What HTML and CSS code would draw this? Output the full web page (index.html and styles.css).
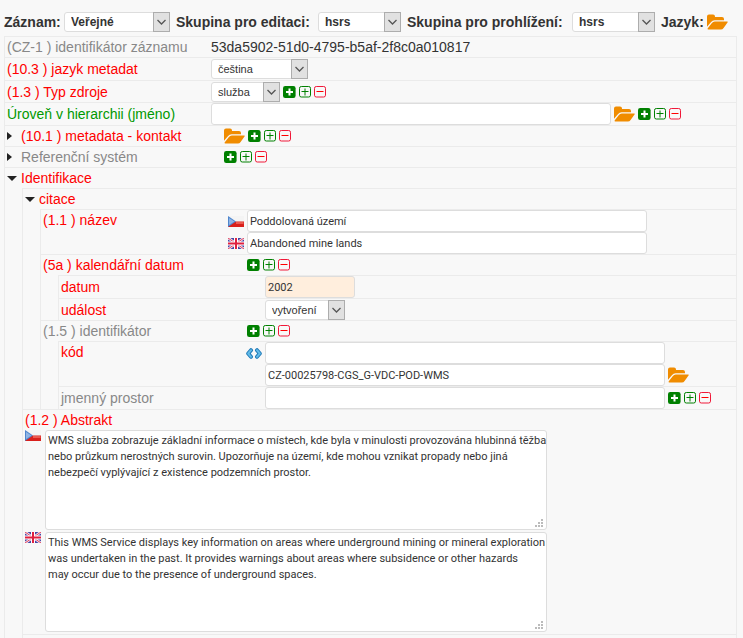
FILE: index.html
```
<!DOCTYPE html>
<html lang="cs">
<head>
<meta charset="utf-8">
<title>Metadata</title>
<link rel="stylesheet" href="styles.css">
</head>
<body>
<svg class="defs" aria-hidden="true">
  <symbol id="folder" viewBox="0 0 21 16">
    <path d="M0 12.8V2.4Q0 .4 2 .4H6Q8 .4 8 2.4V2.9H15Q17 2.9 17 4.9V6.2H7.6Q5.5 6.2 4.1 7.9z"/>
    <path d="M7.8 7.4H20Q21.4 7.4 20.5 8.6L16.6 13.9Q15.6 15.4 13.9 15.4H1.3Q0 15.4.8 14.2L4.9 8.9Q6 7.4 7.8 7.4z"/>
  </symbol>
  <symbol id="plus-full" viewBox="0 0 13 12">
    <rect width="12.6" height="12" rx="2.2" fill="#008000"/>
    <path d="M6.5 2.5v7M3 6h7" stroke="#fff" stroke-width="2"/>
  </symbol>
  <symbol id="plus-line" viewBox="0 0 12 12">
    <rect x=".5" y=".5" width="11" height="10.5" rx="1.8" fill="none" stroke="#008000"/>
    <path d="M6 2.5v7M2.5 5.5h7" stroke="#008000"/>
  </symbol>
  <symbol id="minus-line" viewBox="0 0 12 12">
    <rect x=".5" y=".5" width="11" height="10.5" rx="1.8" fill="none" stroke="#f01838"/>
    <path d="M2.5 5.5h7" stroke="#f00"/>
  </symbol>
  <symbol id="chevron" viewBox="0 0 17 20">
    <rect x=".5" y=".5" width="16" height="19" fill="#e1e1e1" stroke="#adadad"/>
    <path d="M4.5 8L8.5 12L12.5 8" fill="none" stroke="#555" stroke-width="1.3"/>
  </symbol>
  <symbol id="cz" viewBox="0 0 16 11">
    <rect width="16" height="11" fill="#f4f4f4"/>
    <path d="M0 5.5H16V11H0z" fill="#d9201c"/>
    <path d="M8 6H15.500V8H8z" fill="#ea5a50"/>
    <path d="M0 0L8 5.500L0 11z" fill="#4f86cd"/>
    <path d="M1 2L6.500 5.500L1 9z" fill="#8fb5e6"/>
  </symbol>
  <symbol id="gb" viewBox="0 0 16 11">
    <rect width="16" height="11" fill="#4545a5"/>
    <path d="M0 0L16 11M16 0L0 11" stroke="#f3e6f0" stroke-width="2.600"/>
    <path d="M0 0L16 11M16 0L0 11" stroke="#e2405c" stroke-width="1"/>
    <path d="M8 0V11M0 5.500H16" stroke="#fff" stroke-width="4"/>
    <path d="M8 0V11M0 5.500H16" stroke="#df2040" stroke-width="2"/>
  </symbol>
  <symbol id="swap" viewBox="0 0 16 11">
    <g fill="none" stroke-linejoin="round" stroke-linecap="round">
      <path d="M5 2.200L2.200 5.500L5 8.800M11 2.200L13.800 5.500L11 8.800" stroke="#1f7ab8" stroke-width="4"/>
      <path d="M5 2.200L2.200 5.500L5 8.800M11 2.200L13.800 5.500L11 8.800" stroke="#62bbe8" stroke-width="2"/>
    </g>
  </symbol>
</svg>

<header class="bar">
  <div class="field field-record">
    <label for="record">Záznam:</label>
    <span class="select select-l"><select id="record"><option>Veřejné</option></select><svg><use href="#chevron"/></svg></span>
  </div>
  <div class="field field-edit">
    <label for="edit">Skupina pro editaci:</label>
    <span class="select select-m"><select id="edit"><option>hsrs</option></select><svg><use href="#chevron"/></svg></span>
  </div>
  <div class="field field-view">
    <label for="view">Skupina pro prohlížení:</label>
    <span class="select select-m"><select id="view"><option>hsrs</option></select><svg><use href="#chevron"/></svg></span>
  </div>
  <div class="field">
    <span>Jazyk:</span>
    <button class="icon folder" aria-label="Jazyk"><svg><use href="#folder"/></svg></button>
  </div>
</header>

<main class="form">
  <div class="row">
    <span class="label optional">(CZ-1 ) identifikátor záznamu</span>
    <span>53da5902-51d0-4795-b5af-2f8c0a010817</span>
  </div>
  <div class="row row-input">
    <label class="label required" for="lang">(10.3 ) jazyk metadat</label>
    <span class="select select-n"><select id="lang"><option>čeština</option></select><svg><use href="#chevron"/></svg></span>
  </div>
  <div class="row row-select">
    <label class="label required" for="type">(1.3 ) Typ zdroje</label>
    <span class="select select-s"><select id="type"><option>služba</option></select><svg><use href="#chevron"/></svg></span>
    <button class="icon" aria-label="Přidat"><svg><use href="#plus-full"/></svg></button>
    <button class="icon icon-line" aria-label="Kopírovat"><svg><use href="#plus-line"/></svg></button>
    <button class="icon icon-line" aria-label="Odebrat"><svg><use href="#minus-line"/></svg></button>
  </div>
  <div class="row row-input">
    <label class="label conditional" for="level">Úroveň v hierarchii (jméno)</label>
    <input class="text" id="level" type="text">
    <button class="icon folder" aria-label="Vybrat"><svg><use href="#folder"/></svg></button>
    <button class="icon" aria-label="Přidat"><svg><use href="#plus-full"/></svg></button>
    <button class="icon icon-line" aria-label="Kopírovat"><svg><use href="#plus-line"/></svg></button>
    <button class="icon icon-line" aria-label="Odebrat"><svg><use href="#minus-line"/></svg></button>
  </div>
  <div class="row">
    <button class="twisty" aria-label="Rozbalit"></button>
    <span class="label required">(10.1 ) metadata - kontakt</span>
    <button class="icon folder" aria-label="Vybrat"><svg><use href="#folder"/></svg></button>
    <button class="icon" aria-label="Přidat"><svg><use href="#plus-full"/></svg></button>
    <button class="icon icon-line" aria-label="Kopírovat"><svg><use href="#plus-line"/></svg></button>
    <button class="icon icon-line" aria-label="Odebrat"><svg><use href="#minus-line"/></svg></button>
  </div>
  <div class="row">
    <button class="twisty" aria-label="Rozbalit"></button>
    <span class="label optional">Referenční systém</span>
    <button class="icon" aria-label="Přidat"><svg><use href="#plus-full"/></svg></button>
    <button class="icon icon-line" aria-label="Kopírovat"><svg><use href="#plus-line"/></svg></button>
    <button class="icon icon-line" aria-label="Odebrat"><svg><use href="#minus-line"/></svg></button>
  </div>
  <div class="row">
    <button class="twisty open" aria-label="Sbalit"></button>
    <span class="label required">Identifikace</span>
  </div>
  <section class="group">
    <div class="row">
      <button class="twisty open" aria-label="Sbalit"></button>
      <span class="label required">citace</span>
    </div>
    <section class="group">
      <div class="row row-multi">
        <span class="label label-short required">(1.1 ) název</span>
        <div class="values">
          <div class="line"><svg class="mark"><use href="#cz"/></svg><input class="text" type="text" aria-label="Název česky" value="Poddolovaná území"></div>
          <div class="line"><svg class="mark"><use href="#gb"/></svg><input class="text" type="text" aria-label="Název anglicky" value="Abandoned mine lands"></div>
        </div>
      </div>
      <div class="row">
        <span class="label required">(5a ) kalendářní datum</span>
        <button class="icon" aria-label="Přidat"><svg><use href="#plus-full"/></svg></button>
        <button class="icon icon-line" aria-label="Kopírovat"><svg><use href="#plus-line"/></svg></button>
        <button class="icon icon-line" aria-label="Odebrat"><svg><use href="#minus-line"/></svg></button>
      </div>
      <section class="group">
        <div class="row row-input">
          <label class="label required" for="date">datum</label>
          <input class="text date" id="date" type="text" value="2002">
        </div>
        <div class="row row-select">
          <label class="label required" for="event">událost</label>
          <span class="select select-e"><select id="event"><option>vytvoření</option></select><svg><use href="#chevron"/></svg></span>
        </div>
      </section>
      <div class="row">
        <span class="label optional">(1.5 ) identifikátor</span>
        <button class="icon" aria-label="Přidat"><svg><use href="#plus-full"/></svg></button>
        <button class="icon icon-line" aria-label="Kopírovat"><svg><use href="#plus-line"/></svg></button>
        <button class="icon icon-line" aria-label="Odebrat"><svg><use href="#minus-line"/></svg></button>
      </div>
      <section class="group">
        <div class="row row-multi">
          <span class="label label-short required">kód</span>
          <div class="values">
            <div class="line"><svg class="mark"><use href="#swap"/></svg><input class="text" type="text" aria-label="Kód, odkaz"></div>
            <div class="line"><span class="mark"></span><input class="text" type="text" aria-label="Kód" value="CZ-00025798-CGS_G-VDC-POD-WMS">
              <button class="icon folder" aria-label="Vybrat"><svg><use href="#folder"/></svg></button></div>
          </div>
        </div>
        <div class="row row-input">
          <label class="label optional" for="space">jmenný prostor</label>
          <input class="text" id="space" type="text">
          <button class="icon" aria-label="Přidat"><svg><use href="#plus-full"/></svg></button>
          <button class="icon icon-line" aria-label="Kopírovat"><svg><use href="#plus-line"/></svg></button>
          <button class="icon icon-line" aria-label="Odebrat"><svg><use href="#minus-line"/></svg></button>
        </div>
      </section>
    </section>
    <div class="row row-area">
      <span class="label required">(1.2 ) Abstrakt</span>
      <div class="area"><svg class="mark"><use href="#cz"/></svg><textarea aria-label="Abstrakt česky">WMS služba zobrazuje základní informace o místech, kde byla v minulosti provozována hlubinná těžba
nebo průzkum nerostných surovin. Upozorňuje na území, kde mohou vznikat propady nebo jiná
nebezpečí vyplývající z existence podzemních prostor.</textarea></div>
      <div class="area"><svg class="mark"><use href="#gb"/></svg><textarea aria-label="Abstrakt anglicky">This WMS Service displays key information on areas where underground mining or mineral exploration
was undertaken in the past. It provides warnings about areas where subsidence or other hazards
may occur due to the presence of underground spaces.</textarea></div>
    </div>
    <div class="row"></div>
  </section>
</main>
</body>
</html>
```
FILE: styles.css
```
* { box-sizing: border-box; }

html { overflow: hidden; }

body {
  margin: 0;
  background: #f8f8f8;
  color: #333;
  font: 14px/20px "Liberation Sans", Arial, sans-serif;
}

.defs { display: none; }

.bar {
  display: flex;
  gap: 6px;
  padding: 12px 4px 4px;
  font-weight: bold;
  white-space: nowrap;
}

.field { display: flex; align-items: center; justify-content: space-between; gap: 3px; }
.field-record { min-width: 166px; }
.field-edit { min-width: 225px; }
.field-view { min-width: 248px; }

/* rows */
.form {
  margin: 0 6px 0 4px;
  border: 1px solid #ebebeb;
  border-top: 0;
}

.group { margin-left: 17px; border-left: 1px solid #ebebeb; }

.row {
  display: flex;
  align-items: center;
  gap: 3px;
  min-height: 21px;
  padding-left: 2px;
  border-top: 1px solid #ebebeb;
}

.row-select { min-height: 22px; }
.row-input { min-height: 23px; }
.row-multi { align-items: flex-start; }
.row-area { display: grid; gap: 2px; padding-bottom: 2px; }
.row-area .label { margin-bottom: -2px; }

.label { flex: 0 0 201px; white-space: nowrap; }
.label-short { flex-basis: 182px; }
.required { color: #f00; }
.optional { color: #888; }
.conditional { color: #090; }

.values { display: grid; }
.line { display: flex; align-items: center; gap: 3px; }
.area { display: flex; gap: 4px; }
.mark { flex: none; width: 16px; height: 11px; }

/* controls */
input, select, textarea {
  margin: 0;
  border: 1px solid #ddd;
  border-radius: 3px;
  background: #fff;
  color: #333;
  font: 11px/16px "Liberation Sans", Arial, sans-serif;
}

.text, textarea { font-family: Roboto, "Liberation Sans", sans-serif; }
.text { width: 400px; height: 22px; padding: 0 2px; }
.date { width: 90px; background: #ffeedd; }

textarea {
  display: block;
  width: 502px;
  height: 100px;
  padding: 2px 0 2px 2px;
  overflow: hidden;
  white-space: pre;
  resize: both;
}

textarea::-webkit-resizer {
  background:
    linear-gradient(#bbb, #bbb) 4px 11px / 2px 2px no-repeat,
    linear-gradient(#bbb, #bbb) 7px 11px / 2px 2px no-repeat,
    linear-gradient(#bbb, #bbb) 10px 11px / 2px 2px no-repeat,
    linear-gradient(#bbb, #bbb) 7px 8px / 2px 2px no-repeat,
    linear-gradient(#bbb, #bbb) 10px 8px / 2px 2px no-repeat,
    linear-gradient(#bbb, #bbb) 10px 5px / 2px 2px no-repeat;
}

.select { display: inline-grid; height: 20px; }
.select > * { grid-area: 1 / 1; }
.select svg { justify-self: end; width: 17px; height: 20px; pointer-events: none; }
.select select { width: 100%; height: 20px; padding: 0 20px 0 6px; appearance: none; }
.bar select { font-size: 12px; font-weight: bold; }
.select-l { width: 106px; }
.select-m { width: 83px; }
.select-n { width: 97px; }
.select-e { width: 80px; }
.select-s { width: 69px; }

button { padding: 0; border: 0; background: none; cursor: pointer; }
.icon { display: flex; flex: none; width: 13px; height: 12px; }
.icon-line { width: 12px; }
.icon svg { width: 100%; height: 100%; }
.folder { width: 21px; height: 16px; color: #f08c00; }
.folder svg { fill: currentColor; }

.twisty { display: flex; flex: none; align-items: center; width: 11px; height: 12px; }
.twisty + .label { flex-basis: 200px; }

.twisty::before {
  content: "";
  border: 4px solid transparent;
  border-right-width: 0;
  border-left: 5px solid #222;
}

.twisty.open::before {
  border: 5px solid transparent;
  border-top-color: #222;
  border-bottom-width: 0;
}
```
